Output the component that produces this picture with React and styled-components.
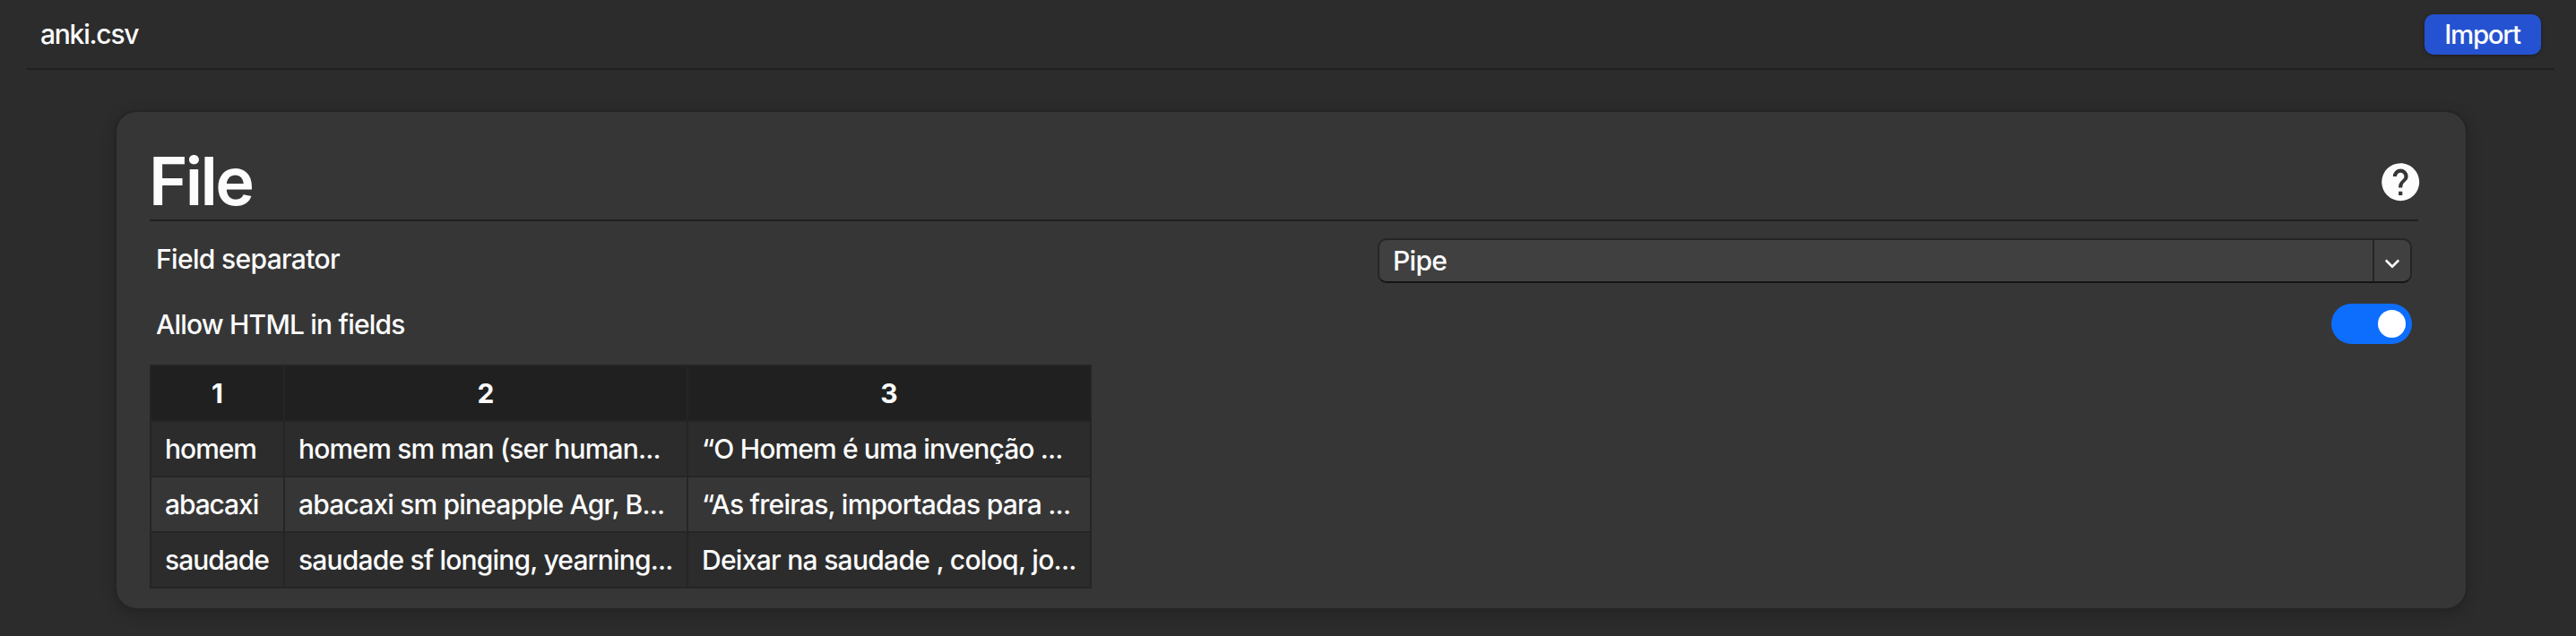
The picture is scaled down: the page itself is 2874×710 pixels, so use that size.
import React from "react";
import styled, { createGlobalStyle } from "styled-components";

const Global = createGlobalStyle`
  * { box-sizing: border-box; }
  html, body { margin: 0; height: 710px; background: #2c2c2c; overflow: hidden; }
  body {
    font-family: Inter, "Liberation Sans", sans-serif;
    font-size: 30px;
    font-weight: 500;
    line-height: 44px;
    color: #fcfcfc;
  }
`;

const Page = styled.div`
  height: 710px;
  overflow: hidden;
`;

const Header = styled.header`
  display: flex;
  justify-content: space-between;
  align-items: flex-start;
  height: 78px;
  margin: 0 24px 0 30px;
  padding: 16px 15px 0 15px;
  border-bottom: 2px solid #202020;
`;

const Text = styled.span`
  display: inline-block;
  white-space: pre;
  letter-spacing: ${(p) => p.$ls || 0}px;
`;

const ImportButton = styled.button`
  width: 130px;
  height: 45px;
  padding: 0 1px 1px 0;
  border: 0;
  border-radius: 10px;
  background: #2552d0;
  box-shadow: 0 1px 4px rgba(0, 0, 0, 0.35);
  color: #fcfcfc;
  font: inherit;
  font-size: 29.5px;
`;

const Card = styled.section`
  height: 558px;
  margin: 45px 121px 0 128px;
  padding: 40px 53px 0 37px;
  border: 2px solid #252525;
  border-radius: 24px;
  background: #363636;
  background-clip: padding-box;
  box-shadow: 0 4px 16px rgba(0, 0, 0, 0.22);
`;

const TitleBar = styled.div`
  display: flex;
  justify-content: space-between;
  height: 82px;
  border-bottom: 2px solid #202020;
`;

const Title = styled.h1`
  margin: 0 0 0 -1px;
  font-size: 74px;
  line-height: 74px;
  font-weight: 600;
`;

const HelpIcon = styled.svg`
  width: 50.4px;
  height: 50.4px;
  margin: 13px -5px 0 0;
`;

const Row = styled.div`
  display: flex;
  justify-content: space-between;
  align-items: flex-start;
  height: ${(p) => p.$h}px;
  padding: ${(p) => p.$top}px 7px 0 7px;
`;

const Label = styled.label`
  margin-top: 1px;
`;

const Select = styled.div`
  display: flex;
  width: 1154px;
  height: 50px;
  border: 2px solid #252525;
  border-bottom-color: #151515;
  border-radius: 10px;
  background: #404040;
`;

const SelectValue = styled.div`
  flex: 1;
  padding: 1px 0 0 15px;
`;

const SelectArrow = styled.div`
  display: flex;
  width: 42px;
  padding-top: 5px;
  align-items: center;
  justify-content: center;
  border-left: 2px solid #252525;
`;

const Toggle = styled.div`
  display: flex;
  align-items: center;
  justify-content: flex-end;
  width: 90px;
  height: 45px;
  padding-right: 7px;
  border-radius: 23px;
  background: #0d6efd;
`;

const Knob = styled.div`
  width: 31px;
  height: 31px;
  border-radius: 50%;
  background: #fff;
`;

const Table = styled.table`
  width: 1051px;
  height: 250px;
  table-layout: fixed;
  border-collapse: collapse;
`;

const Col = styled.col`
  width: ${(p) => p.$w};
`;

const Tr = styled.tr`
  height: 62px;
  background: ${(p) => p.$bg};
`;

const Th = styled.th`
  padding: 0;
  border: 2px solid #252525;
  font-weight: 700;
`;

const Td = styled.td`
  padding: 0 0 0 15px;
  border: 2px solid #252525;
  white-space: nowrap;
`;

const rows = [
  [["homem", -1.02], ["homem sm man (ser human...", -0.82], ["“O Homem é uma invenção ...", -0.85]],
  [["abacaxi", -1.1], ["abacaxi sm pineapple Agr, B...", -0.83], ["“As freiras, importadas para ...", -0.755]],
  [["saudade", -1.02], ["saudade sf longing, yearning...", -0.82], ["Deixar na saudade , coloq, jo...", -0.71]],
];

export default function App() {
  return (
    <Page>
      <Global />
      <Header>
        <Text $ls={-1.24}>anki.csv</Text>
        <ImportButton><Text $ls={-1.3}>Import</Text></ImportButton>
      </Header>
      <Card>
        <TitleBar>
          <Title><Text $ls={-2.7}>File</Text></Title>
          <HelpIcon viewBox="0 0 24 24">
            <path fill="#fcfcfc" d="M15.07,11.25L14.17,12.17C13.45,12.89 13,13.5 13,15H11V14.5C11,13.39 11.45,12.39 12.17,11.67L13.41,10.41C13.78,10.05 14,9.55 14,9C14,7.89 13.1,7 12,7A2,2 0 0,0 10,9H8A4,4 0 0,1 12,5A4,4 0 0,1 16,9C16,9.88 15.64,10.67 15.07,11.25M13,19H11V17H13M12,2A10,10 0 0,0 2,12A10,10 0 0,0 12,22A10,10 0 0,0 22,12C22,6.47 17.5,2 12,2Z" />
          </HelpIcon>
        </TitleBar>
        <Row $h={92} $top={19}>
          <Label><Text $ls={-0.66}>Field separator</Text></Label>
          <Select>
            <SelectValue><Text $ls={-0.7}>Pipe</Text></SelectValue>
            <SelectArrow>
              <svg width="18" height="12" viewBox="0 0 18 12">
                <path d="M1.8 2.5L9 9.7L16.2 2.5" fill="none" stroke="#fcfcfc" strokeWidth="2.6" />
              </svg>
            </SelectArrow>
          </Select>
        </Row>
        <Row $h={68} $top={0}>
          <Label><Text $ls={-0.8}>Allow HTML in fields</Text></Label>
          <Toggle><Knob /></Toggle>
        </Row>
        <Table>
          <colgroup>
            <Col $w="149px" />
            <Col $w="450px" />
            <Col $w="auto" />
          </colgroup>
          <tbody>
            <Tr $bg="#202020">{["1", "2", "3"].map((h) => <Th key={h}>{h}</Th>)}</Tr>
            {rows.map((r, i) => (
              <Tr key={i} $bg={i % 2 ? "#363636" : "#2c2c2c"}>
                {r.map(([t, ls]) => <Td key={t}><Text $ls={ls}>{t}</Text></Td>)}
              </Tr>
            ))}
          </tbody>
        </Table>
      </Card>
    </Page>
  );
}
